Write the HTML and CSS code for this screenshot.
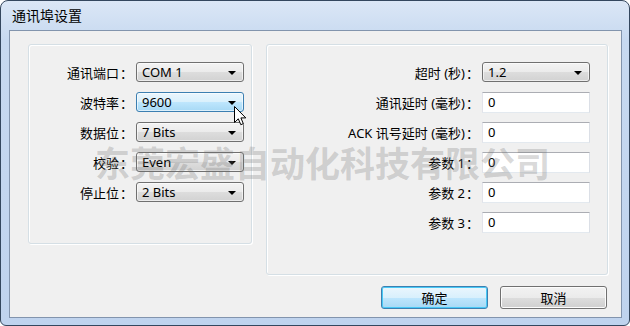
FILE: index.html
```html
<!DOCTYPE html>
<html lang="zh-CN">
<head>
    <meta charset="UTF-8">
    <title>通讯埠设置</title>
    <link rel="stylesheet" href="styles.css">
</head>
<body>
    <div class="win-frame">
        <div class="win-title">通讯埠设置</div>
        <div class="win-client">
            <div class="panel-row">
                <div class="group-box group-left">
                    <div class="field-row">
                        <label>通讯端口<span class="colon">：</span></label>
                        <div class="combo"><span>COM 1</span><i class="arrow"></i></div>
                    </div>
                    <div class="field-row">
                        <label>波特率<span class="colon">：</span></label>
                        <div class="combo combo-hot"><span>9600</span><i class="arrow"></i></div>
                    </div>
                    <div class="field-row">
                        <label>数据位<span class="colon">：</span></label>
                        <div class="combo"><span>7 Bits</span><i class="arrow"></i></div>
                    </div>
                    <div class="field-row">
                        <label>校验<span class="colon">：</span></label>
                        <div class="combo"><span>Even</span><i class="arrow"></i></div>
                    </div>
                    <div class="field-row">
                        <label>停止位<span class="colon">：</span></label>
                        <div class="combo"><span>2 Bits</span><i class="arrow"></i></div>
                    </div>
                </div>
                <div class="group-box group-right">
                    <div class="field-row">
                        <label>超时 (秒)<span class="colon">：</span></label>
                        <div class="combo"><span>1.2</span><i class="arrow"></i></div>
                    </div>
                    <div class="field-row">
                        <label>通讯延时 (毫秒)<span class="colon">：</span></label>
                        <div class="text-box">0</div>
                    </div>
                    <div class="field-row">
                        <label>ACK 讯号延时 (毫秒)<span class="colon">：</span></label>
                        <div class="text-box">0</div>
                    </div>
                    <div class="field-row">
                        <label>参数 1<span class="colon">：</span></label>
                        <div class="text-box">0</div>
                    </div>
                    <div class="field-row">
                        <label>参数 2<span class="colon">：</span></label>
                        <div class="text-box">0</div>
                    </div>
                    <div class="field-row">
                        <label>参数 3<span class="colon">：</span></label>
                        <div class="text-box">0</div>
                    </div>
                </div>
            </div>
            <div class="button-row">
                <button class="win-btn win-btn-default">确定</button>
                <button class="win-btn">取消</button>
            </div>
        </div>

        <div class="watermark">东莞宏盛自动化科技有限公司</div>

        <svg class="mouse-cursor" width="13" height="20" viewBox="0 0 13 20">
            <path d="M0.5 0.5 L0.5 16.5 L4.3 12.8 L6.8 18.7 L9.3 17.6 L6.9 11.9 L11.8 11.9 Z" fill="#fff" stroke="#000" stroke-width="1" stroke-linejoin="miter"/>
        </svg>
    </div>
</body>
</html>
```

FILE: styles.css
```css
:root {
    --client-bg: #f0f0f0;
    --frame-blue: #c3d6ee;
    --ui-font: "Noto Sans", "Noto Sans CJK SC", sans-serif;
}

body {
    margin: 0;
    background: #ffffff;
    font-family: var(--ui-font);
    font-size: 13px;
    color: #000;
}

.win-frame {
    position: relative;
    width: 628px;
    height: 324px;
    border: 1px solid #34475e;
    border-radius: 8px 8px 6px 6px;
    background: linear-gradient(180deg, #dbe7f6 0%, #c7d9f0 12%, #bfd3ee 100%);
    display: flex;
    flex-direction: column;
    overflow: hidden;
}

.win-title {
    height: 29px;
    line-height: 30px;
    padding-left: 11px;
    font-size: 14px;
    flex-shrink: 0;
}

.win-client {
    flex: 1;
    margin: 0 7px 7px 8px;
    border: 1px solid #8294ad;
    background: var(--client-bg);
    padding: 13px 13px 0 18px;
    display: flex;
    flex-direction: column;
}

.panel-row {
    display: flex;
    align-items: flex-start;
    gap: 14px;
}

.group-box {
    border: 1px solid #d5dfe5;
    border-radius: 3px;
    box-shadow: inset 1px 1px 0 #ffffff, 1px 1px 0 #ffffff;
    display: flex;
    flex-direction: column;
    gap: 10px;
    box-sizing: border-box;
    padding-top: 17px;
}

.group-left {
    width: 224px;
    height: 200px;
    padding-right: 7px;
}

.group-right {
    flex: 1;
    height: 231px;
    padding-right: 17px;
}

.field-row {
    display: flex;
    align-items: center;
    justify-content: flex-end;
    height: 20px;
}

.field-row label {
    white-space: nowrap;
    margin-right: 3px;
}

.colon {
    font-family: "Noto Sans CJK TC", sans-serif;
    margin-left: 1px;
}

.combo {
    position: relative;
    width: 108px;
    height: 20px;
    box-sizing: border-box;
    border: 1px solid #707070;
    border-radius: 3px;
    background: linear-gradient(180deg, #f3f3f3 0%, #ebebeb 50%, #dddddd 51%, #d2d2d2 100%);
    box-shadow: inset 0 0 0 1px rgba(255, 255, 255, 0.6);
    line-height: 18px;
    padding-left: 5px;
}

.combo-hot {
    border-color: #3c7fb1;
    background: linear-gradient(180deg, #eaf6fd 0%, #d9f0fc 50%, #bee6fd 51%, #a7d9f5 100%);
}

.arrow {
    position: absolute;
    right: 7px;
    top: 8px;
    width: 0;
    height: 0;
    border-left: 4px solid transparent;
    border-right: 4px solid transparent;
    border-top: 4px solid #000;
}

.text-box {
    width: 108px;
    height: 21px;
    box-sizing: border-box;
    border: 1px solid;
    border-color: #abadb3 #dbdfe6 #e3e9ef #e2e3ea;
    background: #ffffff;
    line-height: 19px;
    padding-left: 5px;
}

.button-row {
    display: flex;
    justify-content: flex-end;
    gap: 12px;
    margin-top: 11px;
    padding-right: 1px;
}

.win-btn {
    width: 107px;
    height: 23px;
    border: 1px solid #707070;
    border-radius: 3px;
    background: linear-gradient(180deg, #f2f2f2 0%, #ebebeb 50%, #dddddd 51%, #cfcfcf 100%);
    box-shadow: inset 0 0 0 1px #fcfcfc;
    font-family: var(--ui-font);
    font-size: 13px;
    padding: 0;
    color: #000;
}

.win-btn-default {
    border-color: #3c7fb1;
    background: linear-gradient(180deg, #eaf6fd 0%, #d9f0fc 50%, #bee6fd 51%, #a7d9f5 100%);
    box-shadow: inset 0 0 0 1px #48c9f6;
}

.watermark {
    position: absolute;
    left: 94px;
    top: 140px;
    font-family: "Noto Sans CJK SC", sans-serif;
    font-weight: 700;
    font-size: 35px;
    line-height: 42px;
    color: rgba(110, 110, 110, 0.27);
    pointer-events: none;
    white-space: nowrap;
}

.mouse-cursor {
    position: absolute;
    left: 233px;
    top: 105px;
}
```
